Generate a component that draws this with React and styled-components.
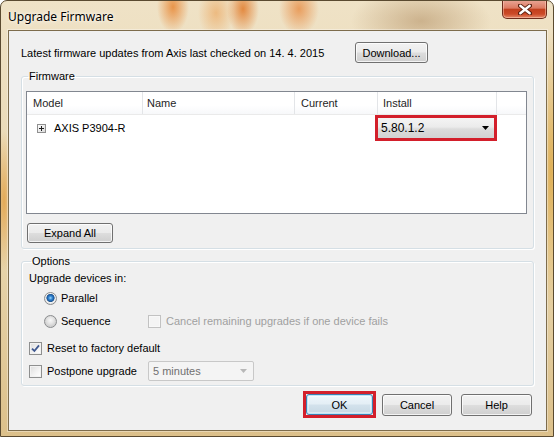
import React from 'react';
import styled, { createGlobalStyle, css } from 'styled-components';

const Global = createGlobalStyle`
  html, body { margin: 0; padding: 0; background: #ffffff; }
  body {
    font-family: "Liberation Sans", Arial, sans-serif;
    font-size: 11px;
    color: #000;
  }
  * { box-sizing: border-box; }
`;

const Frame = styled.div`
  width: 554px;
  height: 437px;
  display: flex;
  flex-direction: column;
  border: 1px solid #5a4a30;
  border-radius: 7px 7px 0 0;
  overflow: hidden;
  background:
    radial-gradient(ellipse 16px 26px at 172px 6px, rgba(232,140,60,.9), rgba(232,140,60,0)),
    radial-gradient(ellipse 18px 26px at 215px 12px, rgba(236,170,100,.7), rgba(236,170,100,0)),
    radial-gradient(ellipse 16px 26px at 242px 8px, rgba(226,128,50,.9), rgba(226,128,50,0)),
    radial-gradient(ellipse 20px 26px at 298px 8px, rgba(232,146,76,.85), rgba(232,146,76,0)),
    radial-gradient(ellipse 70px 34px at 420px 20px, rgba(176,140,96,.55), rgba(176,140,96,0)),
    radial-gradient(ellipse 10px 70px at 3px 200px, rgba(226,164,76,.9), rgba(226,164,76,0)),
    radial-gradient(ellipse 10px 140px at 550px 170px, rgba(222,172,78,.95), rgba(222,172,78,0)),
    linear-gradient(180deg, #efe2c6 0%, #e8d6ae 55%, #dcc08a 100%);
`;

const TitleBar = styled.div`
  height: 29px;
  flex: none;
  display: flex;
  align-items: flex-start;
  justify-content: space-between;
  padding: 0 6px 0 7px;
`;

const TitleText = styled.div`
  align-self: center;
  font-family: "Noto Sans", "Open Sans", sans-serif;
  font-size: 12px;
  color: #000;
  text-shadow: 0 0 6px rgba(255,255,255,.9), 0 0 3px rgba(255,255,255,.9);
  margin-top: 1px;
`;

const CloseButton = styled.div`
  width: 45px;
  height: 19px;
  margin-top: -1px;
  display: flex;
  align-items: center;
  justify-content: center;
  border: 1px solid #6e2c1c;
  border-top: none;
  border-radius: 0 0 5px 5px;
  background: linear-gradient(180deg, #eaa898 0%, #dc7a62 45%, #c2401e 52%, #cc4a28 78%, #e58a6a 100%);
  box-shadow: inset 0 0 0 1px rgba(255,220,200,.45);
`;

const Client = styled.div`
  flex: 1;
  margin: 0 6px 5px 7px;
  border: 1px solid #7d6c4c;
  box-shadow: 0 0 0 1px rgba(255,255,255,.35);
  background: #f0f0f0;
  padding: 11px 12px 0 12px;
  display: flex;
  flex-direction: column;
`;

const TopRow = styled.div`
  display: grid;
  grid-template-columns: 334px auto;
  align-items: center;
  height: 21px;
`;

const Button = styled.button`
  width: ${p => p.$w}px;
  height: ${p => p.$h || 22}px;
  margin: 0;
  padding: 0;
  font-family: "Liberation Sans", Arial, sans-serif;
  font-size: 11px;
  color: #000;
  border: 1px solid #707070;
  border-radius: 3px;
  background: linear-gradient(180deg, #f2f2f2 0%, #ebebeb 48%, #dddddd 52%, #cfcfcf 100%);
  box-shadow: inset 0 0 0 1px rgba(255,255,255,.75);
  ${p => p.$default && css`
    border-color: #3c7fb1;
    box-shadow: inset 0 0 0 1px #bfe6f8, inset 0 0 0 2px rgba(255,255,255,.4);
    background: linear-gradient(180deg, #eef6fb 0%, #e3eef5 48%, #d3e2ec 52%, #c6d8e4 100%);
  `}
`;

const Group = styled.fieldset`
  margin: ${p => p.$mt || 0}px 0 0 0;
  padding: ${p => p.$pad};
  border: 1px solid #d5dfe5;
  border-radius: 3px;
  box-shadow: inset 1px 1px 0 #ffffff, 1px 1px 0 #ffffff;
  min-width: 0;
`;

const Legend = styled.legend`
  padding: 0 1px;
  margin-left: 2px;
  line-height: 14px;
  font-size: 11px;
  color: #000;
`;

const ListBox = styled.div`
  height: 123px;
  border: 1px solid #828790;
  background: #ffffff;
  display: flex;
  flex-direction: column;
`;

const cols = '116px 152px 83px 119px 1fr';

const Header = styled.div`
  display: grid;
  grid-template-columns: ${cols};
  height: 23px;
  border-bottom: 1px solid #eaeaea;
  background: linear-gradient(180deg, #ffffff 0%, #ffffff 60%, #f7f8fa 100%);
`;

const HeadCell = styled.div`
  display: flex;
  align-items: center;
  padding-left: ${p => p.$pl || 6}px;
  border-right: ${p => (p.$last ? 'none' : '1px solid #e3e5e8')};
  color: #1e1e1e;
`;

const Row = styled.div`
  display: grid;
  grid-template-columns: ${cols};
  height: 26px;
  align-items: center;
`;

const ModelCell = styled.div`
  display: flex;
  align-items: center;
  padding-left: 10px;
  gap: 8px;
`;

const Highlight = styled.div`
  border: 3px solid #d31f2b;
  display: flex;
  margin-left: ${p => p.$ml || 0}px;
`;

const InstallCombo = styled.div`
  width: 117px;
  height: 20px;
  display: flex;
  align-items: center;
  justify-content: space-between;
  padding: 0 5px 0 3px;
  background: linear-gradient(180deg, #f4f4f4 0%, #ebebeb 45%, #dcdcdc 55%, #d2d2d2 100%);
  color: #000;
  font-size: 12px;
`;

const ExpandRow = styled.div`
  margin-top: 9px;
  margin-left: 1px;
  display: flex;
`;

const Label = styled.div`
  line-height: 14px;
  color: #000;
`;

const OptRow = styled.div`
  display: flex;
  align-items: center;
  height: ${p => p.$h || 16}px;
  margin-top: ${p => p.$mt || 0}px;
  padding-left: ${p => p.$pl || 0}px;
`;

const Option = styled.div`
  display: flex;
  align-items: center;
  width: ${p => (p.$w ? `${p.$w}px` : 'auto')};
  gap: ${p => p.$gap || 4}px;
  color: ${p => (p.$disabled ? '#a0a0a0' : '#000')};
  white-space: nowrap;
`;

const RadioDot = styled.span`
  width: 13px;
  height: 13px;
  border-radius: 50%;
  border: 1px solid #8a8c8e;
  flex: none;
  background: ${p => p.$checked
    ? 'radial-gradient(circle at 50% 45%, #a8dcfb 0, #3b8fd8 1.6px, #1d5ea8 3.2px, #2a5d90 3.8px, #f4f4f4 4.4px, #e2e2e2 6px)'
    : 'radial-gradient(circle at 50% 40%, #f8f8f8 0, #e6e6e6 3px, #d2d2d2 5.5px)'};
`;

const CheckBox = styled.span`
  width: 13px;
  height: 13px;
  flex: none;
  display: flex;
  align-items: center;
  justify-content: center;
  border: 1px solid ${p => (p.$disabled ? '#c2c2c2' : '#8e8f8f')};
  background: ${p => (p.$disabled
    ? '#f4f4f4'
    : 'linear-gradient(135deg, #dcdcdc 0%, #f4f4f4 60%, #ffffff 100%)')};
  box-shadow: inset 0 0 0 1px ${p => (p.$disabled ? '#f8f8f8' : '#f2f2f2')};
`;

const SmallCombo = styled.div`
  width: 106px;
  height: 20px;
  display: flex;
  align-items: center;
  justify-content: space-between;
  padding: 0 6px 0 4px;
  border: 1px solid #c8c8c8;
  border-radius: 2px;
  background: #f4f4f4;
  color: #707070;
`;

const ButtonRow = styled.div`
  display: flex;
  justify-content: flex-end;
  align-items: center;
  height: 27px;
  margin-top: 5px;
  padding-right: 2px;
`;

const Gap = styled.div`
  width: ${p => p.$w}px;
  flex: none;
`;

const Arrow = ({ color = '#000' }) => (
  <svg width="7" height="4" viewBox="0 0 7 4"><polygon points="0,0 7,0 3.5,4" fill={color} /></svg>
);

const Plus = () => (
  <svg width="9" height="9" viewBox="0 0 9 9">
    <defs>
      <linearGradient id="pg" x1="0" y1="0" x2="1" y2="1">
        <stop offset="0" stopColor="#ffffff" />
        <stop offset="1" stopColor="#d8d8d8" />
      </linearGradient>
    </defs>
    <rect x="0.5" y="0.5" width="8" height="8" fill="url(#pg)" stroke="#909090" />
    <path d="M2 4.5H7M4.5 2V7" stroke="#1e1e1e" strokeWidth="1" />
  </svg>
);

const Check = () => (
  <svg width="9" height="9" viewBox="0 0 9 9">
    <path d="M1 4.6 L3.4 7 L8 1.4" fill="none" stroke="#3f5890" strokeWidth="1.8" />
  </svg>
);

const CloseX = () => (
  <svg width="14" height="11" viewBox="0 0 14 11">
    <path d="M2 1.5 L12 9.5 M12 1.5 L2 9.5" stroke="#5a2010" strokeWidth="4.2" strokeLinecap="round" />
    <path d="M2.3 1.8 L11.7 9.2 M11.7 1.8 L2.3 9.2" stroke="#ffffff" strokeWidth="2.4" strokeLinecap="round" />
  </svg>
);

export default function App() {
  return (
    <>
      <Global />
      <Frame>
        <TitleBar>
          <TitleText>Upgrade Firmware</TitleText>
          <CloseButton><CloseX /></CloseButton>
        </TitleBar>
        <Client>
          <TopRow>
            <span>Latest firmware updates from Axis last checked on 14. 4. 2015</span>
            <Button $w={73} $h={21}>Download...</Button>
          </TopRow>

          <Group $mt={6} $pad="8px 6px 5px 4px">
            <Legend>Firmware</Legend>
            <ListBox>
              <Header>
                <HeadCell>Model</HeadCell>
                <HeadCell $pl={4}>Name</HeadCell>
                <HeadCell>Current</HeadCell>
                <HeadCell $pl={5}>Install</HeadCell>
                <HeadCell $last />
              </Header>
              <Row>
                <ModelCell><Plus /><span>AXIS P3904-R</span></ModelCell>
                <div />
                <div />
                <Highlight $ml={-3}>
                  <InstallCombo><span>5.80.1.2</span><Arrow /></InstallCombo>
                </Highlight>
              </Row>
            </ListBox>
            <ExpandRow><Button $w={86} $h={20}>Expand All</Button></ExpandRow>
          </Group>

          <Group $mt={5} $pad="3px 6px 4px 7px">
            <Legend>Options</Legend>
            <Label>Upgrade devices in:</Label>
            <OptRow $mt={5} $pl={15}>
              <Option><RadioDot $checked /><span>Parallel</span></Option>
            </OptRow>
            <OptRow $mt={7} $pl={15}>
              <Option $w={104}><RadioDot /><span>Sequence</span></Option>
              <Option $disabled $gap={5}><CheckBox $disabled /><span>Cancel remaining upgrades if one device fails</span></Option>
            </OptRow>
            <OptRow $mt={11}>
              <Option $gap={5}><CheckBox><Check /></CheckBox><span>Reset to factory default</span></Option>
            </OptRow>
            <OptRow $mt={5} $h={20}>
              <Option $w={119} $gap={5}><CheckBox /><span>Postpone upgrade</span></Option>
              <SmallCombo><span>5 minutes</span><Arrow color="#b8b8b8" /></SmallCombo>
            </OptRow>
          </Group>

          <ButtonRow>
            <Highlight>
              <Button $w={67} $h={21} $default>OK</Button>
            </Highlight>
            <Gap $w={6} />
            <Button $w={70}>Cancel</Button>
            <Gap $w={9} />
            <Button $w={71}>Help</Button>
          </ButtonRow>
        </Client>
      </Frame>
    </>
  );
}
